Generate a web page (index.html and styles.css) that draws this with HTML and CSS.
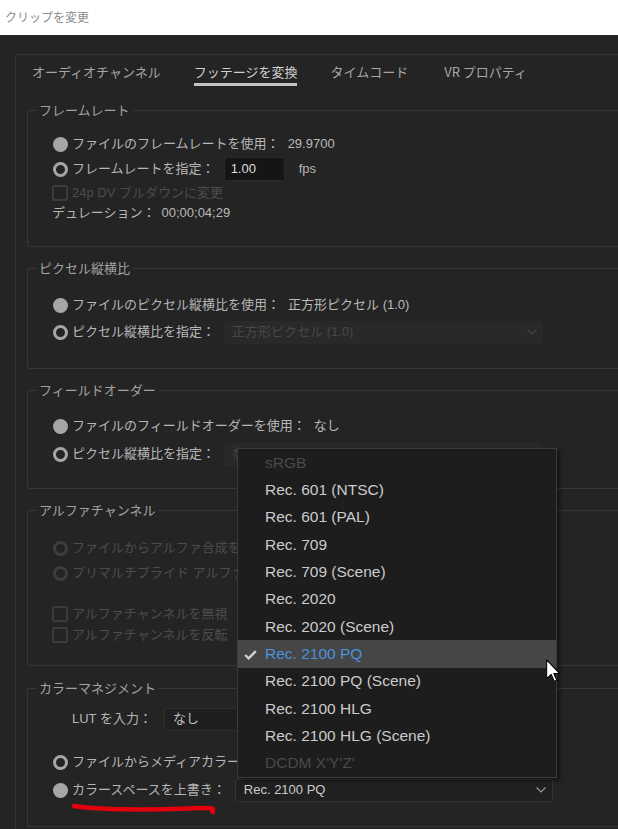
FILE: index.html
```html
<!DOCTYPE html>
<html lang="ja">
<head>
  <meta charset="UTF-8" />
  <link rel="stylesheet" href="styles.css">
</head>
<body>
  <div class="titlebar">クリップを変更</div>

  <div class="dialog">
    <div class="panel">
      <div class="tabs">
        <span class="tab">オーディオチャンネル</span>
        <span class="tab active">フッテージを変換</span>
        <span class="tab">タイムコード</span>
        <span class="tab last">VR プロパティ</span>
      </div>

      <!-- フレームレート -->
      <fieldset class="group">
        <legend>フレームレート</legend>
        <div class="rows rows-fr">
          <div class="row h24"><span class="radio on"></span><span>ファイルのフレームレートを使用：</span><span class="value">29.9700</span></div>
          <div class="row h26"><span class="radio off"></span><span>フレームレートを指定：</span><span class="num">1.00</span><span class="unit">fps</span></div>
          <div class="row h22 dim"><span class="check"></span><span>24p DV プルダウンに変更</span></div>
          <div class="row h18"><span>デュレーション：</span><span class="value short">00;00;04;29</span></div>
        </div>
      </fieldset>

      <!-- ピクセル縦横比 -->
      <fieldset class="group">
        <legend>ピクセル縦横比</legend>
        <div class="rows rows-par">
          <div class="row h26"><span class="radio on"></span><span>ファイルのピクセル縦横比を使用：</span><span class="value">正方形ピクセル (1.0)</span></div>
          <div class="row h26 mt1"><span class="radio off"></span><span>ピクセル縦横比を指定：</span>
            <div class="select disabled w319"><span>正方形ピクセル (1.0)</span><svg class="chev" viewBox="0 0 10 6"><polyline points="0.5,0.5 5,5 9.5,0.5"/></svg></div>
          </div>
        </div>
      </fieldset>

      <!-- フィールドオーダー -->
      <fieldset class="group">
        <legend>フィールドオーダー</legend>
        <div class="rows rows-fo">
          <div class="row h26"><span class="radio on"></span><span>ファイルのフィールドオーダーを使用：</span><span class="value">なし</span></div>
          <div class="row h26 mt2"><span class="radio off"></span><span>ピクセル縦横比を指定：</span>
            <div class="select disabled w319"><span>なし</span><svg class="chev" viewBox="0 0 10 6"><polyline points="0.5,0.5 5,5 9.5,0.5"/></svg></div>
          </div>
        </div>
      </fieldset>

      <!-- アルファチャンネル（右側はメニューに隠れている） -->
      <fieldset class="group group-ac">
        <legend>アルファチャンネル</legend>
        <div class="rows rows-ac">
          <div class="row h24 dim"><span class="radio dis"></span><span>ファイルからアルファ合成を</span></div>
          <div class="row h24 mt1 dim"><span class="radio dis"></span><span>プリマルチプライド アルファ</span></div>
          <div class="row h20 mt19 dim"><span class="check"></span><span>アルファチャンネルを無視</span></div>
          <div class="row h20 mt1 dim"><span class="check"></span><span>アルファチャンネルを反転</span></div>
        </div>
      </fieldset>

      <!-- カラーマネジメント -->
      <fieldset class="group">
        <legend>カラーマネジメント</legend>
        <div class="rows rows-cm">
          <div class="row h26"><span class="lut-label">LUT を入力：</span>
            <div class="select lut"><span>なし</span></div>
          </div>
          <div class="row h26 mt17"><span class="radio off"></span><span>ファイルからメディアカラー</span></div>
          <div class="row h26 mt2"><span class="radio on"></span><span>カラースペースを上書き：</span>
            <div class="select active w318"><span>Rec. 2100 PQ</span><svg class="chev" viewBox="0 0 10 6"><polyline points="0.5,0.5 5,5 9.5,0.5"/></svg></div>
          </div>
        </div>
      </fieldset>
    </div>
  </div>

  <!-- 開いているカラースペースのメニュー -->
  <ul class="menu">
    <li class="off">sRGB</li>
    <li>Rec. 601 (NTSC)</li>
    <li>Rec. 601 (PAL)</li>
    <li>Rec. 709</li>
    <li>Rec. 709 (Scene)</li>
    <li>Rec. 2020</li>
    <li>Rec. 2020 (Scene)</li>
    <li class="picked"><svg class="tick" viewBox="0 0 13 10"><polyline points="1.2,5 4.6,8.4 11.8,1.2"/></svg>Rec. 2100 PQ</li>
    <li>Rec. 2100 PQ (Scene)</li>
    <li>Rec. 2100 HLG</li>
    <li>Rec. 2100 HLG (Scene)</li>
    <li class="off">DCDM X'Y'Z'</li>
  </ul>

  <svg class="pointer" viewBox="-0.6 -0.6 12.4 20" width="14" height="23">
    <path d="M0 0 L0 16.5 L4 12.8 L6.8 19 L9 18 L6.3 12 L11.3 12 Z" fill="#fff" stroke="#000" stroke-width="0.9" stroke-linejoin="round"/>
  </svg>

  <svg class="scribble" viewBox="0 0 150 14" width="150" height="14">
    <path d="M4 4 C 28 8, 80 8, 118 6.5 S 138 7.5, 143 10" fill="none" stroke="#e3000c" stroke-width="4.5" stroke-linecap="round"/>
  </svg>
</body>
</html>
```

FILE: styles.css
```css
:root {
  --bg: #242424;
  --line: #373737;
  --text: #b6b6b6;
  --dim: #4c4c4c;
  --legend: #a2a2a2;
}
html, body {
  margin: 0;
  width: 618px;
  height: 829px;
  overflow: hidden;
}
body {
  position: relative;
  background: var(--bg);
  color: var(--text);
  font-family: "Liberation Sans", "Noto Sans CJK JP", sans-serif;
  font-size: 13px;
  line-height: 18px;
}

.titlebar {
  height: 35px;
  line-height: 33px;
  padding-left: 5px;
  background: #ffffff;
  color: #8c8c8c;
  font-family: "Noto Sans CJK JP", sans-serif;
  font-size: 12px;
}

.dialog {
  padding: 19px 0 0 15px;
}
.panel {
  height: 775px;
  box-sizing: border-box;
  border-left: 1px solid var(--line);
  border-top: 1px solid var(--line);
  border-top-left-radius: 3px;
  overflow: hidden;
}

.tabs {
  display: flex;
  gap: 33px;
  padding: 8px 0 0 16px;
  height: 39px;
}
.tab {
  color: #a6a6a6;
  height: 18px;
  padding-bottom: 2px;
  white-space: nowrap;
  font-family: "Noto Sans CJK JP", sans-serif;
}
.tab.last {
  margin-left: 3px;
}
.tab.active {
  color: #d2d2d2;
  border-bottom: 3px solid #c4c4c4;
}

.group {
  margin: 0 0 13px 11px;
  padding: 0 0 0 8px;
  border: 1px solid var(--line);
  border-right: none;
  border-radius: 3px 0 0 3px;
  min-width: 0;
}
.group-ac {
  margin-bottom: 14px;
}
.group legend {
  padding: 0 3px;
  line-height: 16px;
  color: var(--legend);
  font-family: "Noto Sans CJK JP", sans-serif;
}
.rows {
  padding-left: 16px;
}
.rows-fr { padding-top: 14px; padding-bottom: 24px; }
.rows-par { padding-top: 16px; padding-bottom: 23px; }
.rows-fo { padding-top: 15px; padding-bottom: 21px; }
.rows-ac { padding-top: 18px; padding-bottom: 20px; }
.rows-cm { padding-top: 10px; padding-bottom: 23px; }

.row {
  display: flex;
  align-items: center;
  white-space: nowrap;
}
.row.dim { color: var(--dim); }
.h18 { height: 18px; }
.h20 { height: 20px; }
.h22 { height: 22px; }
.h24 { height: 24px; }
.h26 { height: 26px; }
.mt1 { margin-top: 1px; }
.mt2 { margin-top: 2px; }
.mt17 { margin-top: 17px; }
.mt19 { margin-top: 19px; }

.value {
  margin-left: 8px;
  color: #b9b9b9;
}
.value.short { margin-left: 6px; }

.radio {
  flex: none;
  box-sizing: border-box;
  width: 15px;
  height: 15px;
  border-radius: 50%;
  margin: 0 4px 0 1px;
}
.radio.on { background: #a6a6a6; }
.radio.off { border: 3px solid #a6a6a6; }
.radio.dis { border: 3px solid #3d3d3d; }

.check {
  flex: none;
  box-sizing: border-box;
  width: 16px;
  height: 16px;
  border: 2px solid #3c3c3c;
  border-radius: 2px;
  margin-right: 4px;
}

.num {
  box-sizing: border-box;
  width: 61px;
  height: 24px;
  margin-left: 9px;
  padding-left: 6px;
  display: flex;
  align-items: center;
  background: #151515;
  border: 1px solid #2a2a2a;
  border-radius: 2px;
  color: #dedede;
}
.unit {
  margin-left: 14px;
}

.select {
  box-sizing: border-box;
  height: 23px;
  margin-left: 9px;
  padding: 0 6px 0 8px;
  display: flex;
  align-items: center;
  justify-content: space-between;
  border-radius: 2px;
}
.select.disabled {
  background: #292929;
  color: #484848;
}
.select.active {
  background: #202020;
  border: 1px solid #343434;
  color: #cacaca;
  padding-left: 8px;
}
.select.lut {
  width: 380px;
  margin-left: 0;
  background: #1f1f1f;
  border: 1px solid #2d2d2d;
  color: #c2c2c2;
}
.w319 { width: 319px; }
.w318 { width: 318px; }
.chev {
  width: 10px;
  height: 6px;
  fill: none;
  stroke: currentColor;
  stroke-width: 1.1;
}
.select.disabled .chev { stroke: #474747; }
.select.active .chev { stroke: #9a9a9a; }

.lut-label {
  width: 92px;
  margin-left: 20px;
}

/* ドロップダウンメニュー */
.menu {
  position: absolute;
  left: 237px;
  top: 448px;
  width: 320px;
  height: 330px;
  box-sizing: border-box;
  margin: 0;
  padding: 0;
  list-style: none;
  background: #1d1d1d;
  border: 1px solid #3b3b3b;
  box-shadow: 3px 3px 4px rgba(0, 0, 0, 0.45);
  font-family: "Liberation Sans", Arial, sans-serif;
  font-size: 15.5px;
  color: #cbcbcb;
}
.menu li {
  position: relative;
  height: 27.33px;
  display: flex;
  align-items: center;
  padding-left: 27px;
}
.menu li.off { color: #4a4a4a; }
.menu li.picked {
  background: #464646;
  color: #4a92dc;
}
.tick {
  position: absolute;
  left: 6px;
  top: 10px;
  width: 13px;
  height: 10px;
  fill: none;
  stroke: #cfcfcf;
  stroke-width: 2.4;
}

.pointer {
  position: absolute;
  left: 546px;
  top: 659px;
}
.scribble {
  position: absolute;
  left: 70px;
  top: 802px;
}
```
